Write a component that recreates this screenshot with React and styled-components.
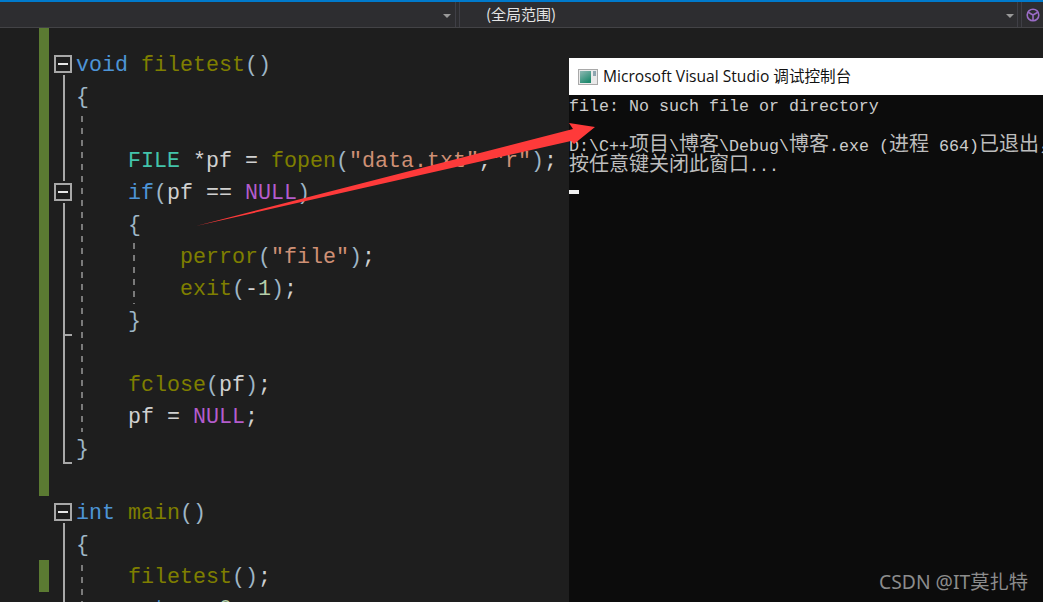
import React from "react";
import styled, { createGlobalStyle } from "styled-components";

const GlobalStyle = createGlobalStyle`
  html, body {
    margin: 0;
    padding: 0;
    background: #1e1e1e;
  }
  body {
    font-family: "Liberation Sans", sans-serif;
  }
`;

const Page = styled.div`
  position: relative;
  height: 100vh;
  display: flex;
  flex-direction: column;
  overflow: hidden;
  border-top: 2px solid #007acc;
  box-sizing: border-box;
`;

const Toolbar = styled.div`
  flex: 0 0 26px;
  display: flex;
  gap: 3px;
  background: #2d2d30;
  border-bottom: 1px solid #434346;
  box-sizing: border-box;
`;

const Combo = styled.div`
  flex: ${(props) => (props.$grow ? "1" : "0 0 456px")};
  display: flex;
  align-items: center;
  padding-left: ${(props) => props.$pad || 0}px;
  padding-right: ${(props) => (props.$grow ? 3 : 4)}px;
  border-right: 1px solid #3f3f46;
  border-left: ${(props) => (props.$grow ? "1px solid #3f3f46" : "none")};
  box-sizing: border-box;
  color: #e4e4e4;
  font-size: 15px;
  font-family: "Noto Sans CJK SC", sans-serif;
`;

const ComboText = styled.span`
  flex: 1;
  position: relative;
  top: -1px;
`;

const Caret = styled.span`
  width: 0;
  height: 0;
  border-left: 4px solid transparent;
  border-right: 4px solid transparent;
  border-top: 4px solid #999;
  margin-top: 2px;
`;

const CubeCell = styled.div`
  flex: 0 0 21px;
  display: flex;
  align-items: center;
  justify-content: center;
  border-left: 1px solid #3f3f46;
`;

const Workspace = styled.div`
  flex: 1;
  display: flex;
  min-height: 0;
`;

const Editor = styled.div`
  flex: 0 0 569px;
  background: #1e1e1e;
  overflow: hidden;
`;

const TopGap = styled.div`
  height: 20px;
  margin-left: 39px;
  width: 10px;
  background: #5b7a32;
`;

const Row = styled.div`
  display: flex;
  height: 32px;
  padding-left: 39px;
  overflow: hidden;
`;

const ChangeMark = styled.div`
  flex: 0 0 10px;
  background: ${(props) => (props.$on ? "#5b7a32" : "transparent")};
`;

const FoldCol = styled.div`
  flex: 0 0 27px;
  display: flex;
  flex-direction: column;
  align-items: flex-start;
  box-sizing: border-box;
`;

const FoldBox = styled.div`
  flex: none;
  width: 18px;
  height: 18px;
  margin: ${(props) => (props.$nested ? "2px" : "7px")} 0 2px 5px;
  border: 2px solid #a8a8a8;
  box-sizing: border-box;
  display: flex;
  align-items: center;
  justify-content: center;
  &::after {
    content: "";
    width: 10px;
    height: 2px;
    background: #e6e6e6;
  }
`;

const FoldLine = styled.div`
  flex: none;
  margin-left: 14px;
  height: ${(props) => (props.$short ? "5px" : "32px")};
  width: ${(props) => (props.$tick ? "9px" : "0")};
  border-left: 2px solid #a8a8a8;
  border-bottom: ${(props) => (props.$tick ? "2px solid #a8a8a8" : "none")};
  box-sizing: border-box;
`;

const guideLayer = ([x, y]) =>
  `linear-gradient(#7a7a7a 6px, transparent 6px) ${x}px ${y}px / 2px 12px repeat-y fixed`;

const Code = styled.pre`
  flex: 1;
  margin: 0;
  font-family: "Liberation Mono", monospace;
  font-size: 21.67px;
  line-height: 36px;
  color: #d0d0d0;
  white-space: pre;
  background: ${(props) =>
    props.$guides ? props.$guides.map(guideLayer).join(", ") : "none"};
`;

const tokenColors = {
  kw: "#4d94d6",
  fn: "#7f7f00",
  ty: "#43c4ab",
  mac: "#b35ccb",
  str: "#cf9075",
  num: "#b5cea8",
  br: "#9fb6c6",
};

const Token = styled.span`
  color: ${(props) => tokenColors[props.$kind]};
`;

const Console = styled.div`
  flex: 1;
  padding-top: 30px;
  background: #1e1e1e;
  display: flex;
  flex-direction: column;
  min-width: 0;
`;

const TitleBar = styled.div`
  flex: 0 0 37px;
  display: flex;
  align-items: center;
  gap: 5px;
  padding-left: 9px;
  background: #fff;
  color: #111;
  font-family: "Open Sans", "Noto Sans CJK SC", sans-serif;
  font-size: 15.6px;
  white-space: nowrap;
`;

const TitleText = styled.span`
  position: relative;
  top: -1px;
`;

const ConsoleBody = styled.div`
  flex: 1;
  background: #0c0c0c;
  color: #cccccc;
  font-family: "Liberation Mono", monospace;
  font-size: 16.67px;
  overflow: hidden;
`;

const ConsoleLine = styled.div`
  height: 20px;
  line-height: 24px;
  white-space: pre;
`;

const Han = styled.span`
  font-family: "Noto Sans CJK SC", sans-serif;
  font-size: 20px;
  line-height: 0;
  color: #bdbdbd;
`;

const Cursor = styled.div`
  width: 10px;
  height: 4px;
  margin-top: 15px;
  background: #f2f2f2;
`;

const ArrowLayer = styled.svg`
  position: absolute;
  left: 0;
  top: -2px;
  pointer-events: none;
`;

const Watermark = styled.div`
  position: absolute;
  right: 15px;
  bottom: 8px;
  color: #8c8c8c;
  font-family: "Noto Sans", "Noto Sans CJK SC", sans-serif;
  font-size: 19.3px;
  line-height: 24px;
`;

const OUTER = [81, 8];
const INNER = [133, 3];
const OUTER2 = [81, 1];

const t = (kind, text) => <Token $kind={kind}>{text}</Token>;

const lines = [
  { on: 1, fold: "head", code: <>{t("kw", "void")} {t("fn", "filetest")}{t("br", "()")}</> },
  { on: 1, fold: "line", code: t("br", "{") },
  { on: 1, fold: "line", guides: [OUTER] },
  { on: 1, fold: "line", guides: [OUTER], code: <>    {t("ty", "FILE")} *pf = {t("fn", "fopen")}{t("br", "(")}{t("str", '"data.txt"')},{t("str", '"r"')}{t("br", ")")};</> },
  { on: 1, fold: "nested", guides: [OUTER], code: <>    {t("kw", "if")}{t("br", "(")}pf == {t("mac", "NULL")}{t("br", ")")}</> },
  { on: 1, fold: "line", guides: [OUTER], code: <>    {t("br", "{")}</> },
  { on: 1, fold: "line", guides: [OUTER, INNER], code: <>        {t("fn", "perror")}{t("br", "(")}{t("str", '"file"')}{t("br", ")")};</> },
  { on: 1, fold: "line", guides: [OUTER, INNER], code: <>        {t("fn", "exit")}{t("br", "(")}-{t("num", "1")}{t("br", ")")};</> },
  { on: 1, fold: "tick", guides: [OUTER], code: <>    {t("br", "}")}</> },
  { on: 1, fold: "line", guides: [OUTER] },
  { on: 1, fold: "line", guides: [OUTER], code: <>    {t("fn", "fclose")}{t("br", "(")}pf{t("br", ")")};</> },
  { on: 1, fold: "line", guides: [OUTER], code: <>    pf = {t("mac", "NULL")};</> },
  { on: 1, fold: "tick", code: t("br", "}") },
  { on: 1 },
  { fold: "head", code: <>{t("kw", "int")} {t("fn", "main")}{t("br", "()")}</> },
  { fold: "line", code: t("br", "{") },
  { on: 1, fold: "line", guides: [OUTER2], code: <>    {t("fn", "filetest")}{t("br", "()")};</> },
  { fold: "line", guides: [OUTER2], code: <>    {t("kw", "return")} {t("num", "0")};</> },
];

const Fold = ({ kind }) => {
  if (kind === "head")
    return (
      <>
        <FoldBox />
        <FoldLine $short />
      </>
    );
  if (kind === "nested")
    return (
      <>
        <FoldLine $short />
        <FoldBox $nested />
        <FoldLine $short />
      </>
    );
  if (kind === "line") return <FoldLine />;
  if (kind === "tick") return <FoldLine $tick />;
  return null;
};

const WindowIcon = () => (
  <svg width="20" height="16" viewBox="0 0 20 16">
    <defs>
      <linearGradient id="pane" x1="0" y1="0" x2="0.6" y2="1">
        <stop offset="0" stopColor="#8fb8b4" />
        <stop offset="1" stopColor="#1f8a6e" />
      </linearGradient>
    </defs>
    <rect x="0.5" y="0.5" width="19" height="15" fill="#e9e9e9" stroke="#a9a9a9" />
    <rect x="2" y="2" width="11" height="12" fill="url(#pane)" />
    <rect x="15" y="2" width="3" height="5" fill="#8fa6b0" />
  </svg>
);

const CubeIcon = () => (
  <svg width="14" height="14" viewBox="0 0 14 14" fill="none" stroke="#9a6cc6" strokeWidth="1.6">
    <circle cx="7" cy="7" r="5.8" />
    <path d="M7 7V12.5M7 7L2.2 4.2M7 7l4.8-2.8" />
  </svg>
);

export default function App() {
  return (
    <>
      <GlobalStyle />
      <Page>
        <Toolbar>
          <Combo>
            <ComboText />
            <Caret />
          </Combo>
          <Combo $grow $pad={26}>
            <ComboText>(全局范围)</ComboText>
            <Caret />
          </Combo>
          <CubeCell>
            <CubeIcon />
          </CubeCell>
        </Toolbar>
        <Workspace>
          <Editor>
            <TopGap />
            {lines.map((line, i) => (
              <Row key={i}>
                <ChangeMark $on={line.on} />
                <FoldCol>
                  <Fold kind={line.fold} />
                </FoldCol>
                <Code $guides={line.guides}>{line.code}</Code>
              </Row>
            ))}
          </Editor>
          <Console>
            <TitleBar>
              <WindowIcon />
              <TitleText>Microsoft Visual Studio 调试控制台</TitleText>
            </TitleBar>
            <ConsoleBody>
              <ConsoleLine>file: No such file or directory</ConsoleLine>
              <ConsoleLine />
              <ConsoleLine>
                D:\C++<Han>项目</Han>\<Han>博客</Han>\Debug\<Han>博客</Han>.exe (<Han>进程</Han> 664)<Han>已退出，</Han>
              </ConsoleLine>
              <ConsoleLine>
                <Han>按任意键关闭此窗口</Han>...
              </ConsoleLine>
              <Cursor />
            </ConsoleBody>
          </Console>
        </Workspace>
        <ArrowLayer width="1043" height="602" viewBox="0 0 1043 602">
          <polygon points="196,226 573,129 569,123 595,127 574,144 571,141" fill="#fe3a3a" />
        </ArrowLayer>
        <Watermark>CSDN @IT莫扎特</Watermark>
      </Page>
    </>
  );
}
